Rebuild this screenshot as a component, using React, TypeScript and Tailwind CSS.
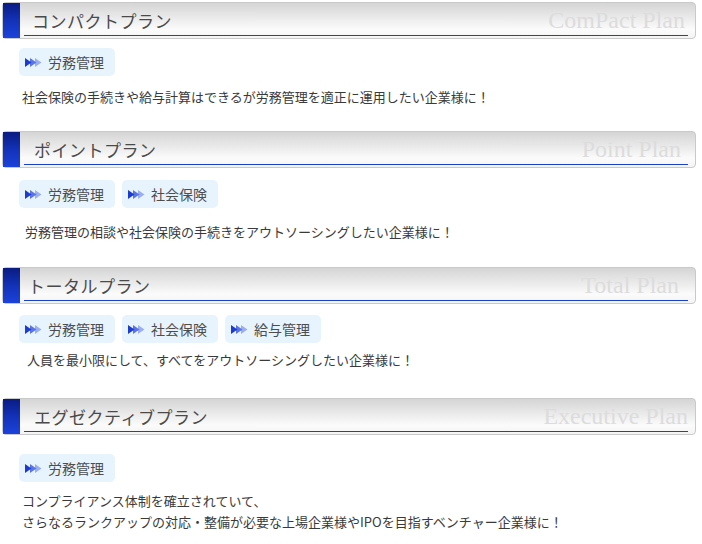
import React from "react";

type Plan = {
  title: string;
  en: string;
  titlePad: string; // left offset of title inside the rule
  enPad: string; // right offset of the English label
  tagsTop: string;
  tags: string[];
  descTop: string;
  descPad: string;
  descLeading: string;
  desc: string[];
  gapAfter: string;
};

const plans: Plan[] = [
  {
    title: "コンパクトプラン",
    en: "ComPact Plan",
    titlePad: "pl-[8px]",
    enPad: "pr-[3px]",
    tagsTop: "mt-[9px]",
    tags: ["労務管理"],
    descTop: "mt-[12px]",
    descPad: "pl-[20px]",
    descLeading: "leading-[18px]",
    desc: ["社会保険の手続きや給与計算はできるが労務管理を適正に運用したい企業様に！"],
    gapAfter: "mb-[25px]",
  },
  {
    title: "ポイントプラン",
    en: "Point Plan",
    titlePad: "pl-[10px]",
    enPad: "pr-[7px]",
    tagsTop: "mt-[12px]",
    tags: ["労務管理", "社会保険"],
    descTop: "mt-[15px]",
    descPad: "pl-[23px]",
    descLeading: "leading-[18px]",
    desc: ["労務管理の相談や社会保険の手続きをアウトソーシングしたい企業様に！"],
    gapAfter: "mb-[26px]",
  },
  {
    title: "トータルプラン",
    en: "Total Plan",
    titlePad: "pl-[4px]",
    enPad: "pr-[9px]",
    tagsTop: "mt-[11px]",
    tags: ["労務管理", "社会保険", "給与管理"],
    descTop: "mt-[8px]",
    descPad: "pl-[25px]",
    descLeading: "leading-[18px]",
    desc: ["人員を最小限にして、すべてをアウトソーシングしたい企業様に！"],
    gapAfter: "mb-[29px]",
  },
  {
    title: "エグゼクティブプラン",
    en: "Executive Plan",
    titlePad: "pl-[10px]",
    enPad: "pr-0",
    tagsTop: "mt-[19px]",
    tags: ["労務管理"],
    descTop: "mt-[8px]",
    descPad: "pl-[20px]",
    descLeading: "leading-[21px]",
    desc: [
      "コンプライアンス体制を確立されていて、",
      "さらなるランクアップの対応・整備が必要な上場企業様やIPOを目指すベンチャー企業様に！",
    ],
    gapAfter: "mb-0",
  },
];

function Arrows() {
  return (
    <svg width="17" height="9" viewBox="0 0 17 9" aria-hidden>
      <polygon points="10,0 16.5,4.5 10,9" fill="#9aaef0" />
      <polygon points="5,0 11.5,4.5 5,9" fill="#5a74e2" />
      <polygon points="0,0 6.5,4.5 0,9" fill="#1d3cce" />
    </svg>
  );
}

function PlanHeader({ plan }: { plan: Plan }) {
  return (
    <div className="flex h-[37px] w-[694px] rounded-[4px] border border-[#c9c9c9] bg-gradient-to-b from-[#d5d5d5] via-[#fbfbfb] via-75% to-[#f4f4f4] pr-[7px]">
      {/* blue marker */}
      <div className="w-[17px] bg-gradient-to-b from-[#0a1c82] via-[#1332b8] to-[#1c42da]" />
      <div
        className={`ml-[4px] mb-[2px] flex flex-1 items-end justify-between border-b border-[#1d40c8] ${plan.titlePad}`}
      >
        <span className="pb-[4px] text-[17px] leading-[20px] tracking-[0.5px] text-[#4a4a4a]">
          {plan.title}
        </span>
        <span
          className={`pb-[3px] font-['Liberation_Serif',serif] text-[24px] leading-[24px] text-[#dcdcdc] ${plan.enPad}`}
        >
          {plan.en}
        </span>
      </div>
    </div>
  );
}

export default function App() {
  return (
    <div className="min-h-[544px] w-[702px] bg-white pl-[2px] pt-[2px] font-['Noto_Sans_CJK_JP',sans-serif]">
      {plans.map((plan) => (
        <section key={plan.title} className={plan.gapAfter}>
          <PlanHeader plan={plan} />
          <div className={`flex gap-[7px] pl-[17px] ${plan.tagsTop}`}>
            {plan.tags.map((t) => (
              <div
                key={t}
                className="flex h-[28px] w-[96px] items-center gap-[6px] rounded-[5px] bg-[#e7f4fe] pl-[6px]"
              >
                <Arrows />
                <span className="text-[14px] leading-none text-[#4d4d4d]">{t}</span>
              </div>
            ))}
          </div>
          <div
            className={`${plan.descTop} ${plan.descPad} ${plan.descLeading} text-[13px] text-[#3a3a3a]`}
          >
            {plan.desc.map((line) => (
              <p key={line}>{line}</p>
            ))}
          </div>
        </section>
      ))}
    </div>
  );
}
